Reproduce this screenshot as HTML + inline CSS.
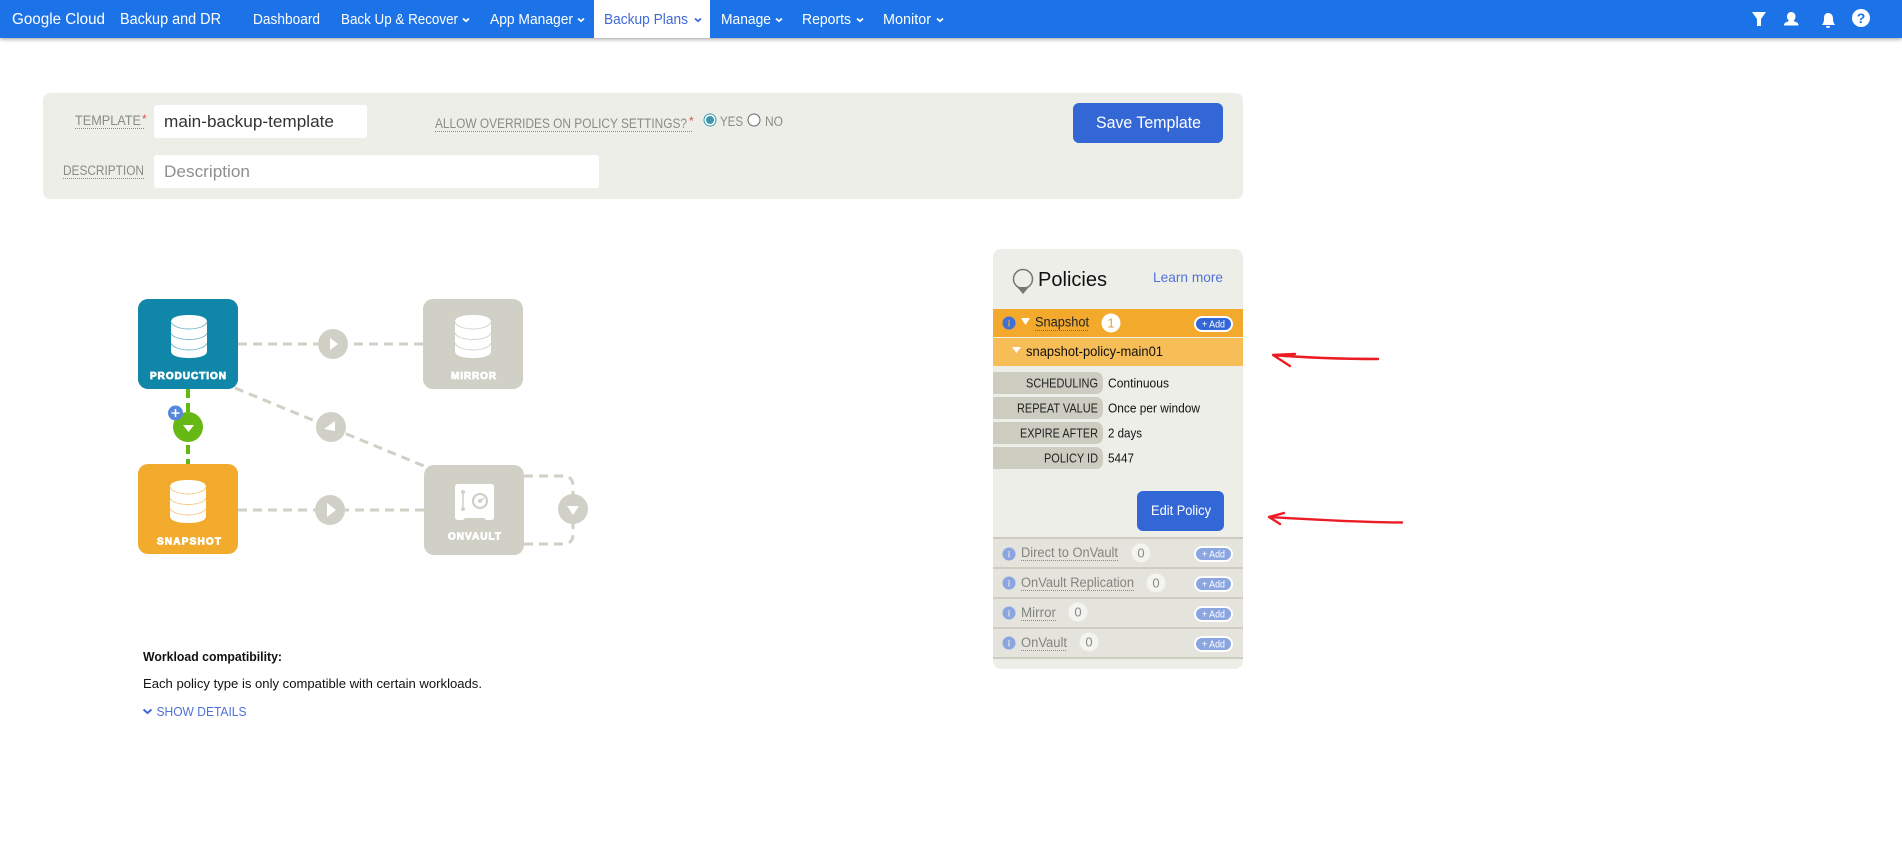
<!DOCTYPE html>
<html><head><meta charset="utf-8"><title>Backup and DR</title>
<style>
html,body{margin:0;padding:0;background:#fff;width:1902px;height:846px;overflow:hidden}
svg{display:block;font-family:"Liberation Sans",Arial,sans-serif}
.n{fill:#fff;font-size:14.500px}
.l{fill:#8b8b86;font-size:13.500px}
.k{fill:#222;font-size:12.500px;text-anchor:end}
.v{fill:#111;font-size:12.500px}
.t{fill:#fff;font-size:10px;font-weight:bold;stroke:#fff;stroke-width:.8px}
.m{fill:#85857f;font-size:13.500px}
.c{font-size:13px;text-anchor:middle;fill:#8b8b86}
.a{fill:#fff;font-size:10px}
.dash{fill:none;stroke:#d0d0c6;stroke-width:3;stroke-dasharray:9 6}
.dot{fill:none;stroke:#8b8b86;stroke-width:1;stroke-dasharray:1 1}
</style></head><body>
<svg width="1902" height="846" viewBox="0 0 1902 846" xmlns="http://www.w3.org/2000/svg">
<defs>
<filter id="sh" x="-5%" y="-20%" width="110%" height="160%"><feDropShadow dx="0" dy="1" stdDeviation="2" flood-color="#000" flood-opacity=".4"/></filter>
<symbol id="db" viewBox="0 0 36 43" overflow="visible">
<path fill="#fff" d="M0 7C0 2 8 0 18 0S36 2 36 7V36C36 41 28 43 18 43S0 41 0 36Z"/>
<path fill="none" stroke="currentColor" stroke-width=".9" d="M0 7C1 11 9 14 18 14S35 11 36 7M0 18C1 22 9 24.500 18 24.500S35 22 36 18M0 28C1 32 9 35 18 35S35 32 36 28"/>
</symbol>
<symbol id="chev" viewBox="0 0 8 6" overflow="visible"><path d="M1 1.500L4 4.200L7 1.500" fill="none" stroke="#fff" stroke-width="1.800"/></symbol>
</defs>

<!-- nav -->
<rect width="1902" height="38" fill="#1a73e8" filter="url(#sh)"/>
<rect x="594" width="116" height="38" fill="#fff"/>
<text x="12" y="24" font-size="15.500" fill="#fff" textLength="93" lengthAdjust="spacingAndGlyphs">Google Cloud</text>
<text x="120" y="24" font-size="15.500" fill="#fff" textLength="101" lengthAdjust="spacingAndGlyphs">Backup and DR</text>
<text class="n" x="253" y="24" textLength="67" lengthAdjust="spacingAndGlyphs">Dashboard</text>
<text class="n" x="341" y="24" textLength="117" lengthAdjust="spacingAndGlyphs">Back Up &amp; Recover</text>
<use href="#chev" x="462" y="17" width="8" height="6"/>
<text class="n" x="490" y="24" textLength="83" lengthAdjust="spacingAndGlyphs">App Manager</text>
<use href="#chev" x="577" y="17" width="8" height="6"/>
<text class="n" x="604" y="24" textLength="84" lengthAdjust="spacingAndGlyphs" style="fill:#3f69d6">Backup Plans</text>
<path d="M695 18.500L698 21.200L701 18.500" fill="none" stroke="#3f69d6" stroke-width="1.800"/>
<text class="n" x="721" y="24" textLength="50" lengthAdjust="spacingAndGlyphs">Manage</text>
<use href="#chev" x="775" y="17" width="8" height="6"/>
<text class="n" x="802" y="24" textLength="49" lengthAdjust="spacingAndGlyphs">Reports</text>
<use href="#chev" x="856" y="17" width="8" height="6"/>
<text class="n" x="883" y="24" textLength="48" lengthAdjust="spacingAndGlyphs">Monitor</text>
<use href="#chev" x="936" y="17" width="8" height="6"/>
<!-- nav icons -->
<path fill="#fff" d="M1752 12H1766L1761 19V26H1757V19Z"/>
<path fill="#fff" d="M1791 12C1794 12 1795.500 14 1795.500 16.500C1795.500 18.500 1794.500 20 1793.500 21C1796 22 1798.500 22.500 1798.500 25.500H1784C1784 22.500 1786.500 22 1789 21C1788 20 1787 18.500 1787 16.500C1787 14 1788.500 12 1791 12Z"/>
<path fill="#fff" d="M1828 13C1831.500 13 1833 15.500 1833 18.500C1833 22 1834 23.500 1835 25H1822C1823 23.500 1824 22 1824 18.500C1824 15.500 1825 13 1828 13ZM1826 26H1830C1830 27.500 1829 28 1828 28S1826 27.500 1826 26Z"/>
<circle cx="1861" cy="18" r="9" fill="#fff"/>
<text x="1861" y="23" font-size="14" font-weight="bold" fill="#1a73e8" text-anchor="middle">?</text>

<!-- template panel -->
<rect x="43" y="93" width="1200" height="106" rx="7" fill="#eeeee9"/>
<rect x="154" y="105" width="213" height="33" rx="3" fill="#fff"/>
<rect x="154" y="155" width="445" height="33" rx="3" fill="#fff"/>
<text class="l" x="75" y="125" textLength="66" lengthAdjust="spacingAndGlyphs">TEMPLATE</text>
<text x="142" y="123" font-size="12" fill="#d9534f">*</text>
<path class="dot" d="M75 128.500H144"/>
<text class="l" x="63" y="175" textLength="81" lengthAdjust="spacingAndGlyphs">DESCRIPTION</text>
<path class="dot" d="M63 178.500H144"/>
<text x="164" y="127" font-size="16.500" fill="#333" textLength="170" lengthAdjust="spacingAndGlyphs">main-backup-template</text>
<text x="164" y="177" font-size="16.500" fill="#8f8f8f" textLength="86" lengthAdjust="spacingAndGlyphs">Description</text>
<text class="l" x="435" y="128" textLength="252" lengthAdjust="spacingAndGlyphs">ALLOW OVERRIDES ON POLICY SETTINGS?</text>
<text x="689" y="125" font-size="12" fill="#d9534f">*</text>
<path class="dot" d="M435 131.500H692"/>
<circle cx="710" cy="120" r="6" fill="#fff" stroke="#3c97ad" stroke-width="1"/><circle cx="710" cy="120" r="4" fill="#3c97ad"/>
<text class="l" x="720" y="126" textLength="23" lengthAdjust="spacingAndGlyphs">YES</text>
<circle cx="754" cy="120" r="6" fill="#fff" stroke="#666" stroke-width="1"/>
<text class="l" x="765" y="126" textLength="18" lengthAdjust="spacingAndGlyphs">NO</text>
<rect x="1073" y="103" width="150" height="40" rx="6" fill="#3367d6"/>
<text x="1096" y="128" font-size="16.500" fill="#fff" textLength="105" lengthAdjust="spacingAndGlyphs">Save Template</text>

<!-- diagram lines -->
<path class="dash" d="M238 344H318M423 344H348"/>
<path class="dash" d="M238 510H315M424 510H345"/>
<path class="dash" d="M235 388L424 466"/>
<path class="dash" d="M524 476H563Q573 476 573 486V509M524 544H563Q573 544 573 534V509"/>
<path fill="none" stroke="#66b814" stroke-width="4" stroke-dasharray="9 5" d="M188 389V464"/>

<!-- boxes -->
<rect x="138" y="299" width="100" height="90" rx="10" fill="#1087a8"/>
<use href="#db" x="171" y="315" width="36" height="43" color="#6fb4c9"/>
<text class="t" x="150" y="379" textLength="76" lengthAdjust="spacing">PRODUCTION</text>
<rect x="138" y="464" width="100" height="90" rx="10" fill="#f2ab2c"/>
<use href="#db" x="170" y="480" width="36" height="43" color="#f6c777"/>
<text class="t" x="157" y="544.500" textLength="64" lengthAdjust="spacing">SNAPSHOT</text>
<rect x="423" y="299" width="100" height="90" rx="10" fill="#d0d0c6"/>
<use href="#db" x="455" y="315" width="36" height="43" color="#d0d0c6"/>
<text class="t" x="451" y="379" textLength="45" lengthAdjust="spacing">MIRROR</text>
<rect x="424" y="465" width="100" height="90" rx="10" fill="#d0d0c6"/>
<path fill="#fff" d="M458 484H491Q494 484 494 487V517Q494 520 491 520H486L484 518H465L463 520H458Q455 520 455 517V487Q455 484 458 484Z"/>
<circle cx="480" cy="501" r="7" fill="none" stroke="#d0d0c6" stroke-width="2.200"/>
<circle cx="480" cy="501" r="2" fill="#d0d0c6"/><path d="M480 501L484 498" stroke="#d0d0c6" stroke-width="1.500"/>
<path d="M463 492V509" stroke="#d0d0c6" stroke-width="1.500"/><circle cx="463" cy="492" r="2" fill="#d0d0c6"/><circle cx="463" cy="509" r="2" fill="#d0d0c6"/>
<text class="t" x="448" y="539.500" textLength="53" lengthAdjust="spacing">ONVAULT</text>

<!-- circles -->
<circle cx="333" cy="344" r="15" fill="#d0d0c6"/><path fill="#fff" d="M330 338L338 344L330 350Z"/>
<circle cx="330" cy="510" r="15" fill="#d0d0c6"/><path fill="#fff" d="M327 503L336 510L327 517Z"/>
<circle cx="331" cy="427" r="15" fill="#d0d0c6"/><path fill="#fff" d="M324 429L335 421V431Z"/>
<circle cx="573" cy="509" r="15" fill="#d0d0c6"/><path fill="#fff" d="M567 506H579L573 515Z"/>
<circle cx="188" cy="427" r="15" fill="#66b814"/><path fill="#fff" d="M183 425H194L188.500 432Z"/>
<circle cx="175.500" cy="413" r="7.500" fill="#5588dd"/><path d="M171.500 413H179.500M175.500 409V417" stroke="#fff" stroke-width="1.600"/>

<!-- compat -->
<text x="143" y="661" font-size="13" font-weight="bold" fill="#111" textLength="139" lengthAdjust="spacingAndGlyphs">Workload compatibility:</text>
<text x="143" y="688" font-size="13" fill="#111" textLength="339" lengthAdjust="spacingAndGlyphs">Each policy type is only compatible with certain workloads.</text>
<path d="M143.500 709.500L147.500 713L151.500 709.500" fill="none" stroke="#3f69d6" stroke-width="2"/>
<text x="156.500" y="716" font-size="13" fill="#4f72d8" textLength="90" lengthAdjust="spacingAndGlyphs">SHOW DETAILS</text>

<!-- policies panel -->
<rect x="993" y="249" width="250" height="420" rx="8" fill="#eeeee9"/>
<circle cx="1023" cy="279" r="9.500" fill="none" stroke="#77776f" stroke-width="1.500"/>
<path d="M1017 287L1023 294L1029 287Z" fill="#77776f"/>
<text x="1038" y="286" font-size="20" fill="#111" textLength="69" lengthAdjust="spacingAndGlyphs">Policies</text>
<text x="1153" y="282" font-size="14" fill="#4f72d8" textLength="70" lengthAdjust="spacingAndGlyphs">Learn more</text>
<rect x="993" y="309" width="250" height="28" fill="#f2a92c"/>
<rect x="993" y="338" width="250" height="28" fill="#f7bd57"/>
<circle cx="1009" cy="323" r="6.500" fill="#3f6fd8"/><text x="1009" y="326.500" font-size="9" font-weight="bold" fill="#f2a92c" text-anchor="middle">i</text>
<path fill="#fff" d="M1021 318H1030L1025.500 325Z"/>
<text x="1035" y="326.500" font-size="13.500" fill="#222" textLength="54" lengthAdjust="spacingAndGlyphs">Snapshot</text>
<path d="M1035 330.500H1089" fill="none" stroke="#8a6a28" stroke-width="1" stroke-dasharray="1 1"/>
<circle cx="1111" cy="323" r="9.500" fill="#fff"/>
<text x="1111" y="327.500" font-size="13" fill="#e0a33a" text-anchor="middle">1</text>
<rect x="1194" y="316" width="39" height="16" rx="8" fill="#fff"/><rect x="1196" y="318" width="35" height="12" rx="6" fill="#3367d6"/>
<text class="a" x="1202" y="327.500" textLength="23" lengthAdjust="spacingAndGlyphs">+ Add</text>
<path fill="#fff" d="M1012 347H1021L1016.500 353Z"/>
<text x="1026" y="356" font-size="13.500" fill="#111" textLength="137" lengthAdjust="spacingAndGlyphs">snapshot-policy-main01</text>

<path d="M993 372H1095Q1103 372 1103 380V386Q1103 394 1095 394H993Z" fill="#ccccc1"/>
<path d="M993 397H1095Q1103 397 1103 405V411Q1103 419 1095 419H993Z" fill="#ccccc1"/>
<path d="M993 422H1095Q1103 422 1103 430V436Q1103 444 1095 444H993Z" fill="#ccccc1"/>
<path d="M993 447H1095Q1103 447 1103 455V461Q1103 469 1095 469H993Z" fill="#ccccc1"/>
<text class="k" x="1098" y="387.500" textLength="72" lengthAdjust="spacingAndGlyphs">SCHEDULING</text>
<text class="k" x="1098" y="412.500" textLength="81" lengthAdjust="spacingAndGlyphs">REPEAT VALUE</text>
<text class="k" x="1098" y="437.500" textLength="78" lengthAdjust="spacingAndGlyphs">EXPIRE AFTER</text>
<text class="k" x="1098" y="462.500" textLength="54" lengthAdjust="spacingAndGlyphs">POLICY ID</text>
<text class="v" x="1108" y="387.500" textLength="61" lengthAdjust="spacingAndGlyphs">Continuous</text>
<text class="v" x="1108" y="412.500" textLength="92" lengthAdjust="spacingAndGlyphs">Once per window</text>
<text class="v" x="1108" y="437.500" textLength="34" lengthAdjust="spacingAndGlyphs">2 days</text>
<text class="v" x="1108" y="462.500" textLength="26" lengthAdjust="spacingAndGlyphs">5447</text>
<rect x="1137" y="491" width="87" height="40" rx="6" fill="#3367d6"/>
<text x="1151" y="515" font-size="13.500" fill="#fff" textLength="60" lengthAdjust="spacingAndGlyphs">Edit Policy</text>

<rect x="993" y="538" width="250" height="121" fill="#e4e3dc"/>
<path d="M993 538H1243M993 568H1243M993 598H1243M993 628H1243M993 658H1243" stroke="#cdccc1" stroke-width="2"/>

<circle cx="1009" cy="554" r="6.500" fill="#8aa5e0"/><text x="1009" y="557.500" font-size="9" font-weight="bold" fill="#e4e3dc" text-anchor="middle">i</text>
<text class="m" x="1021" y="557" textLength="97" lengthAdjust="spacingAndGlyphs">Direct to OnVault</text>
<path class="dot" d="M1021 560.500H1118"/>
<circle cx="1141" cy="553" r="9.500" fill="#f3f3ef"/><text class="c" x="1141" y="557.500">0</text>
<rect x="1194" y="546" width="39" height="16" rx="8" fill="#fff"/><rect x="1196" y="548" width="35" height="12" rx="6" fill="#8aa5e0"/>
<text class="a" x="1202" y="557.500" textLength="23" lengthAdjust="spacingAndGlyphs">+ Add</text>

<circle cx="1009" cy="583" r="6.500" fill="#8aa5e0"/><text x="1009" y="586.500" font-size="9" font-weight="bold" fill="#e4e3dc" text-anchor="middle">i</text>
<text class="m" x="1021" y="587" textLength="113" lengthAdjust="spacingAndGlyphs">OnVault Replication</text>
<path class="dot" d="M1021 590.500H1134"/>
<circle cx="1156" cy="583" r="9.500" fill="#f3f3ef"/><text class="c" x="1156" y="587.500">0</text>
<rect x="1194" y="576" width="39" height="16" rx="8" fill="#fff"/><rect x="1196" y="578" width="35" height="12" rx="6" fill="#8aa5e0"/>
<text class="a" x="1202" y="587.500" textLength="23" lengthAdjust="spacingAndGlyphs">+ Add</text>

<circle cx="1009" cy="613" r="6.500" fill="#8aa5e0"/><text x="1009" y="616.500" font-size="9" font-weight="bold" fill="#e4e3dc" text-anchor="middle">i</text>
<text class="m" x="1021" y="617" textLength="35" lengthAdjust="spacingAndGlyphs">Mirror</text>
<path class="dot" d="M1021 620.500H1056"/>
<circle cx="1078" cy="612" r="9.500" fill="#f3f3ef"/><text class="c" x="1078" y="616.500">0</text>
<rect x="1194" y="606" width="39" height="16" rx="8" fill="#fff"/><rect x="1196" y="608" width="35" height="12" rx="6" fill="#8aa5e0"/>
<text class="a" x="1202" y="617.500" textLength="23" lengthAdjust="spacingAndGlyphs">+ Add</text>

<circle cx="1009" cy="643" r="6.500" fill="#8aa5e0"/><text x="1009" y="646.500" font-size="9" font-weight="bold" fill="#e4e3dc" text-anchor="middle">i</text>
<text class="m" x="1021" y="647" textLength="46" lengthAdjust="spacingAndGlyphs">OnVault</text>
<path class="dot" d="M1021 650.500H1067"/>
<circle cx="1089" cy="642" r="9.500" fill="#f3f3ef"/><text class="c" x="1089" y="646.500">0</text>
<rect x="1194" y="636" width="39" height="16" rx="8" fill="#fff"/><rect x="1196" y="638" width="35" height="12" rx="6" fill="#8aa5e0"/>
<text class="a" x="1202" y="647.500" textLength="23" lengthAdjust="spacingAndGlyphs">+ Add</text>

<!-- red arrows -->
<path d="M1378 359C1345 359 1310 358 1273 355M1295 354L1273 355L1290 366" fill="none" stroke="#ec1c24" stroke-width="2.400" stroke-linecap="round" stroke-linejoin="round"/>
<path d="M1402 522.500C1365 522.500 1320 520 1269 517M1284 513L1269 517L1280 524" fill="none" stroke="#ec1c24" stroke-width="2.400" stroke-linecap="round" stroke-linejoin="round"/>
</svg>
</body></html>
